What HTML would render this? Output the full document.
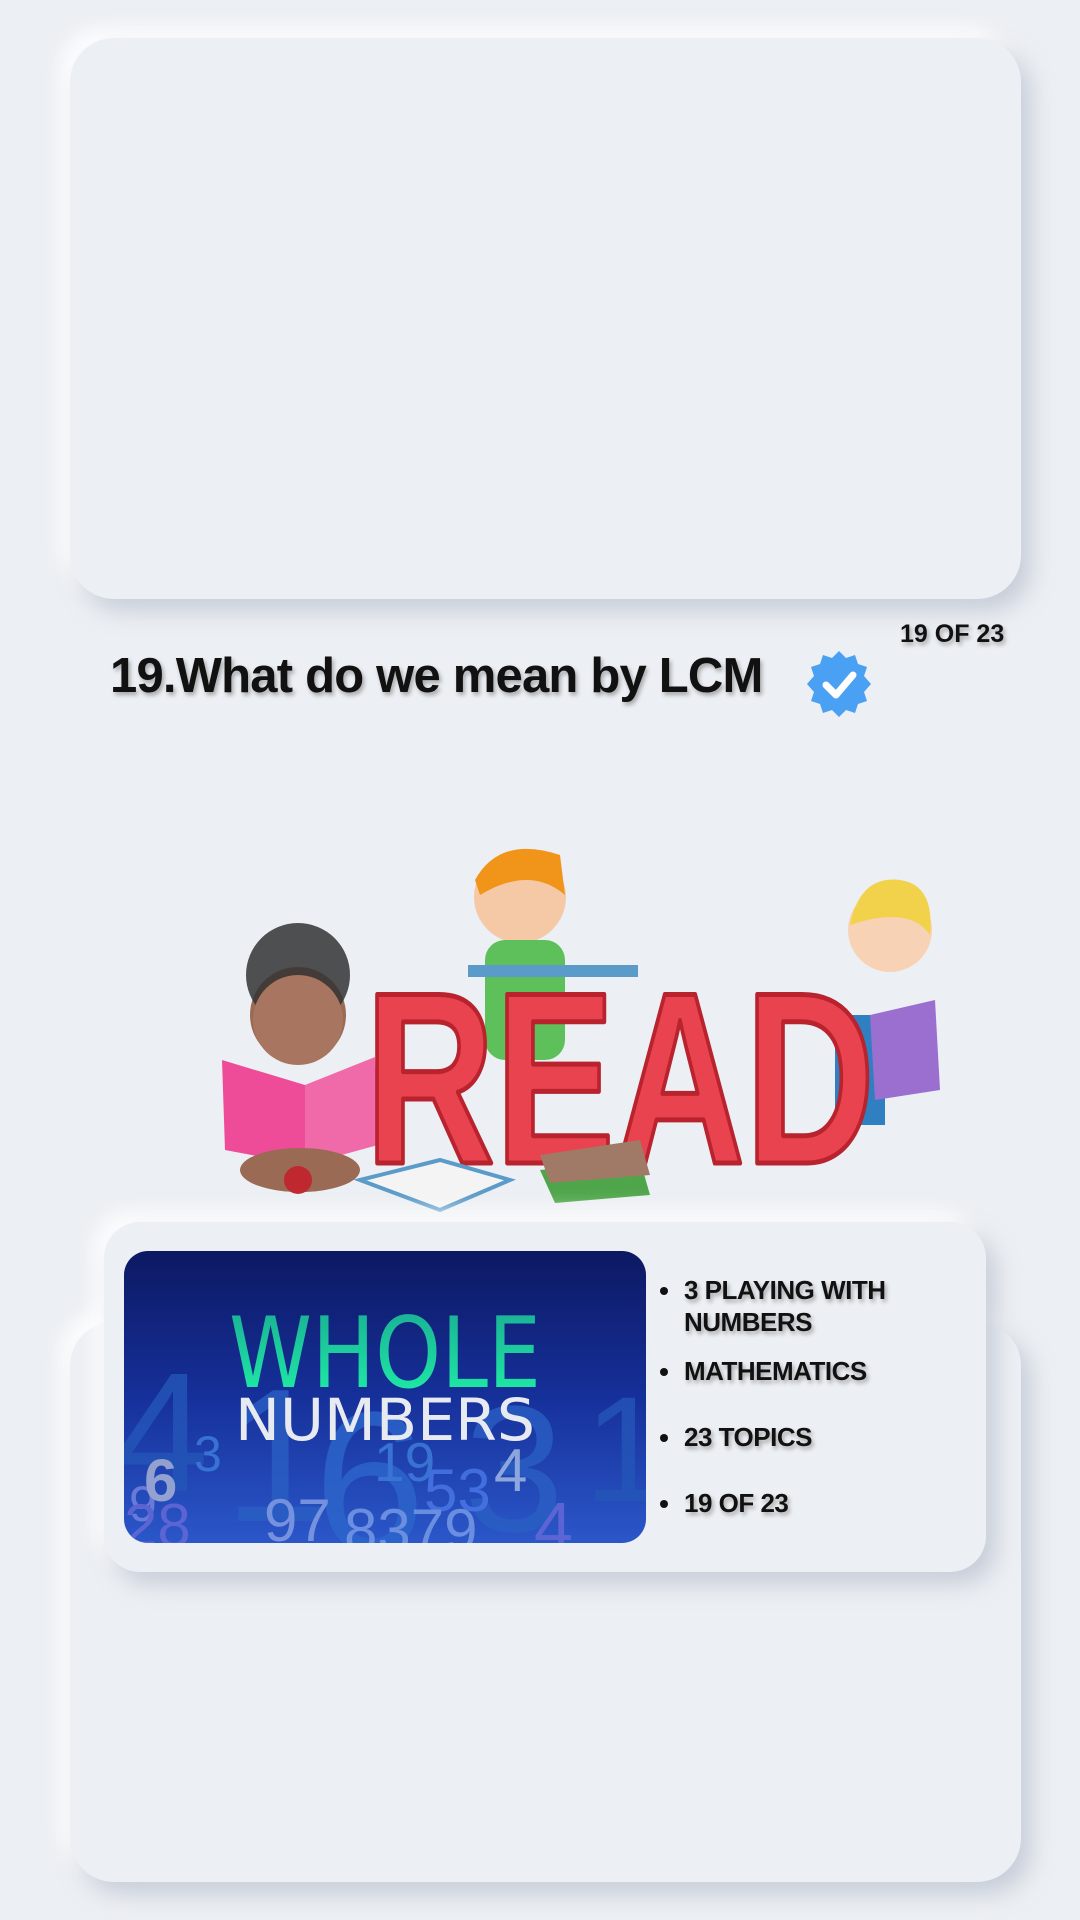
<!DOCTYPE html>
<html><head><meta charset="utf-8"><style>
*{margin:0;padding:0;box-sizing:border-box}
body{width:1080px;height:1920px;background:#eceff3;font-family:"Liberation Sans",sans-serif;position:relative;overflow:hidden}
.card{position:absolute;background:#eceff3;border-radius:44px;box-shadow:10px 12px 22px rgba(170,178,195,.55),-10px -10px 20px rgba(255,255,255,.95)}
.t{position:absolute;font-weight:bold;color:#111;text-shadow:2px 3px 4px rgba(0,0,0,.3)}
ul{position:absolute;left:660px;top:1274px;list-style:none}
li{position:absolute;left:0;font-weight:bold;font-size:26px;color:#111;text-shadow:2px 3px 4px rgba(0,0,0,.3);width:260px;line-height:32px;padding-left:24px;letter-spacing:-0.5px}
li:before{content:"";position:absolute;left:0;top:13px;width:8px;height:8px;border-radius:50%;background:#111}
</style></head><body>
<div class="card" style="left:70px;top:38px;width:951px;height:561px"></div>
<div class="card" style="left:70px;top:1322px;width:951px;height:560px"></div>
<div class="t" style="left:900px;top:620px;font-size:25px">19 OF 23</div>
<div class="t" style="left:110px;top:648px;font-size:49px;letter-spacing:-0.8px">19.What do we mean by LCM</div>
<svg style="position:absolute;left:805px;top:650px" width="68" height="68" viewBox="-34 -34 68 68">
<polygon fill="#4aa0f2" points="0,-33 7,-26 16,-29 19,-20 28,-17 25,-8 32,0 25,8 28,17 19,20 16,29 7,26 0,33 -7,26 -16,29 -19,20 -28,17 -25,8 -32,0 -25,-8 -28,-17 -19,-20 -16,-29 -7,-26"/>
<path d="M-13,1 L-3,11 L14,-9" stroke="#fff" stroke-width="7" fill="none" stroke-linecap="round" stroke-linejoin="round"/>
</svg>
<svg style="position:absolute;left:210px;top:835px" width="770" height="400" viewBox="0 0 770 400">
<circle cx="88" cy="180" r="48" fill="#9a6a55"/>
<circle cx="88" cy="140" r="52" fill="#333" opacity=".85"/>
<circle cx="88" cy="185" r="45" fill="#a87560"/>
<path d="M12,225 L95,250 L95,330 L15,315Z" fill="#ee4c98"/>
<path d="M95,250 L165,222 L168,310 L95,330Z" fill="#f069a8"/>
<ellipse cx="90" cy="335" rx="60" ry="22" fill="#9a6a55"/>
<circle cx="88" cy="345" r="14" fill="#c0282f"/>
<circle cx="310" cy="62" r="46" fill="#f5c9a6"/>
<path d="M265,45 Q290,0 350,20 L355,60 Q320,30 270,60Z" fill="#f0951a"/>
<rect x="275" y="105" width="80" height="120" rx="20" fill="#5ec05a"/>
<rect x="258" y="130" width="170" height="12" fill="#5b9bc9"/>
<rect x="625" y="180" width="50" height="110" fill="#2f7fc1"/>
<circle cx="680" cy="95" r="42" fill="#f8d2b4"/>
<path d="M640,90 Q650,40 690,45 Q725,50 720,100 Q700,70 640,90Z" fill="#f2d24a"/>
<path d="M660,180 L725,165 L730,255 L665,265Z" fill="#9b6fcf"/>
<text x="155" y="328" font-family="Liberation Sans" font-weight="bold" font-size="245" fill="#e8434f" stroke="#b8232e" stroke-width="5" stroke-linejoin="round" textLength="510" lengthAdjust="spacingAndGlyphs">READ</text>
<path d="M150,345 L230,325 L300,345 L230,375Z" fill="#f4f4f4" stroke="#5b9bc9" stroke-width="4"/>
<path d="M330,335 L430,325 L440,360 L345,368Z" fill="#4fa64a"/>
<path d="M330,320 L430,305 L440,340 L340,348Z" fill="#a07a66"/>
</svg>
<div class="card" style="left:104px;top:1222px;width:882px;height:350px;border-radius:36px"></div>
<svg style="position:absolute;left:124px;top:1251px" width="522" height="292" viewBox="0 0 522 292">
<defs>
<linearGradient id="bg" x1="0" y1="0" x2="0" y2="1"><stop offset="0" stop-color="#0c1862"/><stop offset=".5" stop-color="#16309a"/><stop offset="1" stop-color="#2b57c9"/></linearGradient>
<linearGradient id="gr" x1="0" y1="0" x2="0" y2="1"><stop offset="0" stop-color="#1aa894"/><stop offset="1" stop-color="#1ff5a6"/></linearGradient>
<clipPath id="c"><rect width="522" height="292" rx="24"/></clipPath>
</defs>
<g clip-path="url(#c)">
<rect width="522" height="292" fill="url(#bg)"/>
<g font-family="Liberation Sans" fill="#3f7fdc" opacity=".8">
<text x="-10" y="240" font-size="170" fill="#2456b8">4</text>
<text x="100" y="270" font-size="190" fill="#2a5fc4">1</text>
<text x="190" y="300" font-size="200" fill="#2c66cc">6</text>
<text x="340" y="280" font-size="180" fill="#2a5fc4">3</text>
<text x="460" y="250" font-size="150" fill="#2456b8">1</text>
<text x="5" y="270" font-size="50" fill="#7a86e0">9</text>
<text x="20" y="250" font-size="60" font-weight="bold" fill="#b0b8d8">6</text>
<text x="70" y="220" font-size="50">3</text>
<text x="140" y="290" font-size="60" fill="#8aa2e6">97</text>
<text x="250" y="230" font-size="55">19</text>
<text x="300" y="260" font-size="60" fill="#4b78e8">53</text>
<text x="370" y="240" font-size="60" fill="#a8c0e8">4</text>
<text x="220" y="300" font-size="60" fill="#7b9ee8">8379</text>
<text x="410" y="300" font-size="70" fill="#6a6ad8">4</text>
<text x="0" y="295" font-size="60" fill="#6a6ad8">28</text>
</g>
<text x="261" y="136" text-anchor="middle" font-family="DejaVu Sans" font-size="98" fill="url(#gr)" textLength="312" lengthAdjust="spacingAndGlyphs">WHOLE</text>
<text x="261" y="189" text-anchor="middle" font-family="DejaVu Sans" font-size="58" fill="#e8eaf2" textLength="300" lengthAdjust="spacingAndGlyphs">NUMBERS</text>
</g>
</svg>
<ul>
<li style="top:0">3 PLAYING WITH NUMBERS</li>
<li style="top:81px">MATHEMATICS</li>
<li style="top:147px">23 TOPICS</li>
<li style="top:213px">19 OF 23</li>
</ul>
</body></html>
